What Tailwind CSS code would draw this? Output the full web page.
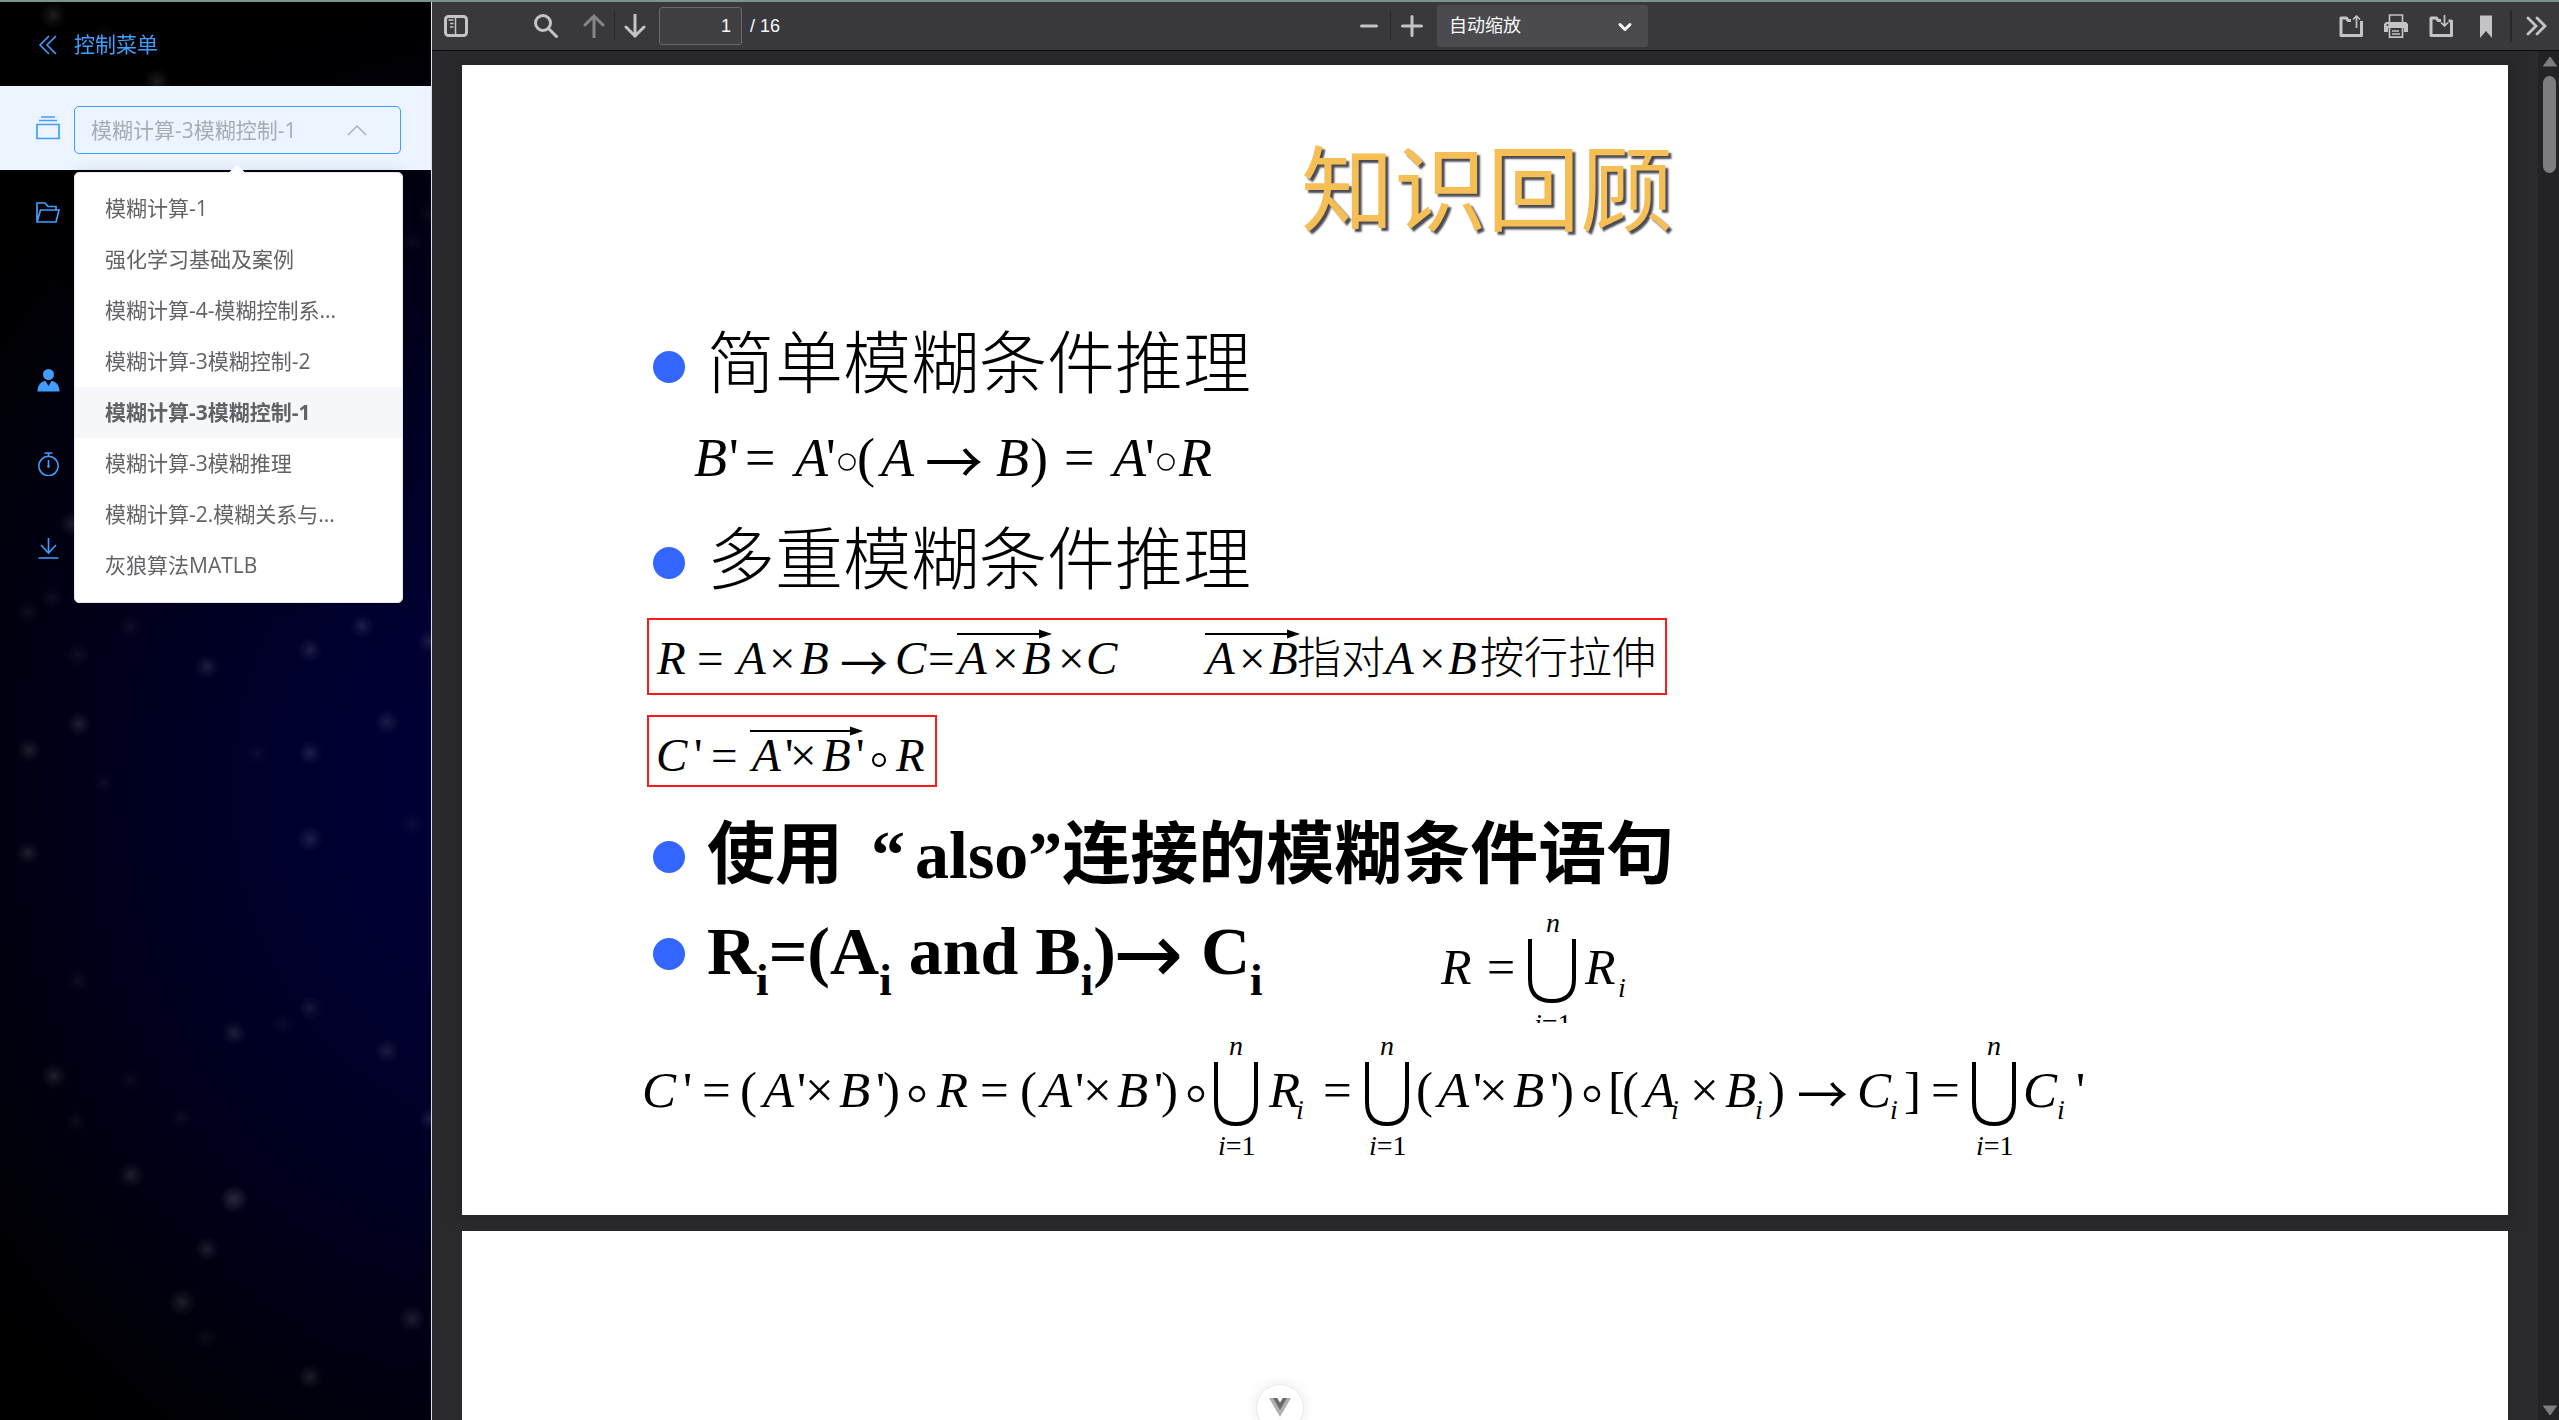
<!DOCTYPE html>
<html lang="zh-CN">
<head>
<meta charset="utf-8">
<title>控制菜单</title>
<script src="https://cdn.jsdelivr.net/npm/@tailwindcss/browser@4"></script>
</head>
<body class="flex h-screen flex-col overflow-hidden bg-black font-['Open_Sans','Noto_Sans_CJK_SC',sans-serif]">
<div class="h-0.5 shrink-0 bg-[#7a938f]"></div>
<div class="flex min-h-0 flex-1">

  <!-- Side menu -->
  <aside class="relative z-10 w-[432px] shrink-0 border-r border-[#dcdfe6] bg-[radial-gradient(ellipse_700px_820px_at_520px_790px,#000038_0%,#000032_25%,#00001c_60%,#000008_85%,#000000_100%)] text-[21px] text-[#409eff]">
    <svg class="absolute inset-0 h-full w-full" aria-hidden="true">
      <defs><radialGradient id="s"><stop offset="0" stop-color="#fff" stop-opacity=".8"/><stop offset=".4" stop-color="#fff" stop-opacity=".4"/><stop offset="1" stop-color="#fff" stop-opacity="0"/></radialGradient></defs>
      <g fill="url(#s)" opacity=".15">
        <circle cx="53" cy="13" r="14"/><circle cx="157" cy="80" r="14"/><circle cx="104" cy="33" r="12" opacity=".4"/>
        <circle cx="207" cy="665" r="13"/><circle cx="310" cy="648" r="13"/><circle cx="362" cy="624" r="13"/><circle cx="79" cy="722" r="13"/><circle cx="29" cy="748" r="13"/><circle cx="387" cy="720" r="13"/><circle cx="310" cy="751" r="13"/>
        <circle cx="430" cy="639" r="13"/><circle cx="130" cy="625" r="13" opacity=".5"/><circle cx="78" cy="653" r="13" opacity=".5"/><circle cx="28" cy="851" r="13"/><circle cx="310" cy="837" r="14"/><circle cx="104" cy="781" r="12" opacity=".4"/><circle cx="257" cy="752" r="12" opacity=".4"/><circle cx="412" cy="822" r="12" opacity=".4"/>
        <circle cx="78" cy="979" r="12" opacity=".5"/><circle cx="310" cy="1006" r="13" opacity=".8"/><circle cx="234" cy="1031" r="13"/><circle cx="387" cy="1049" r="13"/><circle cx="54" cy="1074" r="14"/><circle cx="283" cy="1022" r="12" opacity=".4"/><circle cx="130" cy="1078" r="12" opacity=".4"/><circle cx="181" cy="1116" r="12" opacity=".4"/><circle cx="76" cy="1120" r="12" opacity=".4"/>
        <circle cx="131" cy="1173" r="14"/><circle cx="234" cy="1197" r="15"/><circle cx="234" cy="1197" r="13"/><circle cx="207" cy="1247" r="13"/><circle cx="182" cy="1300" r="15"/><circle cx="412" cy="1317" r="14"/><circle cx="310" cy="1375" r="13"/><circle cx="206" cy="1336" r="13" opacity=".4"/><circle cx="430" cy="1117" r="12"/><circle cx="412" cy="240" r="13" opacity=".4"/><circle cx="430" cy="212" r="13" opacity=".4"/><circle cx="72" cy="522" r="14"/><circle cx="52" cy="596" r="12" opacity=".5"/><circle cx="28" cy="610" r="12" opacity=".5"/>
      </g>
    </svg>
    <nav class="relative flex flex-col">
      <button type="button" class="flex h-[84px] items-center gap-[14px] pl-9 pt-px text-left">
        <svg class="size-6" viewBox="0 0 24 24" fill="none" stroke="currentColor" stroke-width="1.6"><path d="M13 3 4 12l9 9M20 3l-9 9 9 9"/></svg>
        <span>控制菜单</span>
      </button>
      <div class="flex h-[84px] items-center gap-[14px] bg-[#ebf4ff] pl-9 pr-[30px] pt-1">
        <svg class="size-6 -mt-1" viewBox="0 0 24 24" fill="none" stroke="currentColor" stroke-width="1.7"><path d="M1 8.500h22v14H1zM3 4.500h18M5 1h14"/></svg>
        <div class="relative flex-1">
          <select id="doc" aria-label="文档" class="block h-12 w-full appearance-none rounded-[5px] border border-[#409eff] bg-transparent pl-4 pt-0.5 text-[#a8abb2]"><option>模糊计算-3模糊控制-1</option></select>
          <svg class="pointer-events-none absolute right-[34px] top-4 h-4 w-5" viewBox="0 0 20 16" fill="none" stroke="#a8abb2" stroke-width="1.400"><path d="m1 13 9-9 9 9"/></svg>
          <div class="absolute left-0 top-[66px] w-[329px] rounded-[5px] border border-[#e4e7ed] bg-white pb-[11px] pt-[10px] text-[#606266] shadow-[0_0_16px_rgba(0,0,0,0.12)]">
            <span class="absolute -top-[6px] left-[156px] size-3 rotate-45 rounded-xs bg-white"></span>
            <ul role="listbox" aria-label="文档列表" class="relative leading-[51px]">
              <li role="option" class="pl-[30px]">模糊计算-1</li>
              <li role="option" class="pl-[30px]">强化学习基础及案例</li>
              <li role="option" class="pl-[30px]">模糊计算-4-模糊控制系...</li>
              <li role="option" class="pl-[30px]">模糊计算-3模糊控制-2</li>
              <li role="option" aria-selected="true" class="bg-[#f5f7fa] pl-[30px] font-bold">模糊计算-3模糊控制-1</li>
              <li role="option" class="pl-[30px]">模糊计算-3模糊推理</li>
              <li role="option" class="pl-[30px]">模糊计算-2.模糊关系与...</li>
              <li role="option" class="pl-[30px]">灰狼算法MATLB</li>
            </ul>
          </div>
        </div>
      </div>
      <button type="button" aria-label="文件夹" class="mb-[84px] flex h-[84px] items-center pl-9"><svg class="size-6" viewBox="0 0 24 24" fill="none" stroke="currentColor" stroke-width="1.700"><path d="M1 22V3h8l3 3.500h8V10M1 22 4.500 10H23l-3 12z"/></svg></button>
      <button type="button" aria-label="用户" class="flex h-[84px] items-center pl-9"><svg class="size-6" viewBox="0 0 24 24" fill="currentColor"><circle cx="12.500" cy="6.500" r="5.500"/><path d="M1.500 23.500c0-6 3-10 8-10.500l3 5 3-5c5 .5 8 4.500 8 10.500z"/></svg></button>
      <button type="button" aria-label="计时" class="flex h-[84px] items-center pl-9"><svg class="size-6" viewBox="0 0 24 24" fill="none" stroke="currentColor" stroke-width="1.600"><circle cx="12.500" cy="14" r="9.700"/><path d="M8.500 1h8M12.500 1v3.500M12.500 8v6"/><circle cx="12.500" cy="14.500" r="1.300" fill="currentColor" stroke="none"/></svg></button>
      <button type="button" aria-label="下载" class="flex h-[84px] items-center pl-9"><svg class="size-6" viewBox="0 0 24 24" fill="none" stroke="currentColor" stroke-width="1.600"><path d="M12.500 2v15M5 9l7.500 8L20 9M2.500 22h20"/></svg></button>
    </nav>
  </aside>

  <!-- Document viewer -->
  <main class="flex min-w-0 flex-1 flex-col bg-[#2a2a2e]">
    <div class="grid h-[49px] shrink-0 grid-cols-[1fr_auto_1fr] items-center border-b border-[#0c0c0d] bg-[#38383d] font-['Liberation_Sans','Noto_Sans_CJK_SC',sans-serif] text-lg text-[#f9f9fa]">
      <div class="flex items-center pl-3 text-[#c4c4c6]">
        <button type="button" aria-label="侧栏"><svg class="size-6" viewBox="0 0 24 24" fill="none" stroke="currentColor" stroke-width="3"><rect x="1.500" y="2.500" width="21" height="19" rx="3"/><path d="M11.500 2v20M4.500 6h5M6 9.500h3.500M6 13h3.500" stroke-width="1.500"/></svg></button>
        <button type="button" aria-label="查找" class="ml-[66px]"><svg class="size-6" viewBox="0 0 24 24" fill="none" stroke="currentColor" stroke-width="3" stroke-linecap="round"><circle cx="9" cy="9" r="7.500"/><path d="m14.500 14.500 8 8"/></svg></button>
        <button type="button" aria-label="上一页" class="ml-6 text-[#85858a]"><svg class="size-6" viewBox="0 0 24 24" fill="none" stroke="currentColor" stroke-width="3" stroke-linecap="round"><path d="M12 23V2M3 11l9-9 9 9"/></svg></button>
        <span class="ml-2 h-[30px] w-px bg-[#28282c]"></span>
        <button type="button" aria-label="下一页" class="ml-2"><svg class="size-6" viewBox="0 0 24 24" fill="none" stroke="currentColor" stroke-width="3" stroke-linecap="round"><path d="M12 1v21M3 13l9 9 9-9"/></svg></button>
        <input type="text" value="1" aria-label="页码" class="ml-3 h-[38px] w-[83px] rounded-[3px] border border-[#6a6a6e] bg-[#404044] pr-[10px] text-right text-[#f9f9fa]">
        <span class="ml-2 text-[#f9f9fa]">/ 16</span>
      </div>
      <div class="flex items-center pl-[14px] text-[#c4c4c6]">
        <button type="button" aria-label="缩小"><svg class="size-6" viewBox="0 0 24 24" fill="none" stroke="currentColor" stroke-width="3" stroke-linecap="round"><path d="M4.500 12h15"/></svg></button>
        <span class="ml-[9px] h-[30px] w-px bg-[#28282c]"></span>
        <button type="button" aria-label="放大" class="ml-[9px]"><svg class="size-6" viewBox="0 0 24 24" fill="none" stroke="currentColor" stroke-width="3" stroke-linecap="round"><path d="M2.500 12h19M12 2.500v19"/></svg></button>
        <div class="relative ml-[13px]">
          <select aria-label="缩放" class="block h-[42px] w-[211px] appearance-none rounded-[3px] bg-[#4a4a4f] pl-3 text-[#f9f9fa]"><option>自动缩放</option></select>
          <svg class="pointer-events-none absolute right-[15px] top-[14px] size-4" viewBox="0 0 16 16" fill="none" stroke="#f9f9fa" stroke-width="3" stroke-linecap="round" stroke-linejoin="round"><path d="m3 5.500 5 5 5-5"/></svg>
        </div>
      </div>
      <div class="flex items-center justify-end gap-[21px] pr-[11px] text-[#c4c4c6]">
        <button type="button" aria-label="打开"><svg class="size-6" viewBox="0 0 24 24" fill="none" stroke="currentColor" stroke-width="3" stroke-linejoin="round"><path d="M12 6.500H9L7.500 4H2v17.500h20.500V7"/><path d="M17.500 14V2M14 5.500 17.500 2 21 5.500" stroke-width="1.700"/></svg></button>
        <button type="button" aria-label="打印"><svg class="size-6" viewBox="0 0 24 24"><path d="M5.500 9V1h13v8" fill="none" stroke="currentColor" stroke-width="1.600"/><path d="M2 8h20l2 2v8h-4v-4H4v4H0v-8z" fill="currentColor"/><path d="M5.500 14v9.200h13V14M8 17h7M8 20h8" fill="none" stroke="currentColor" stroke-width="1.700"/><circle cx="3.500" cy="11" r="1" fill="#38383d"/></svg></button>
        <button type="button" aria-label="保存"><svg class="size-6" viewBox="0 0 24 24" fill="none" stroke="currentColor" stroke-width="3" stroke-linejoin="round"><path d="M12 6.500H9L7.500 4H2v17.500h20.500V7h-3"/><path d="M15.500 1v11M12 8.500l3.500 3.500L19 8.500" stroke-width="1.700"/></svg></button>
        <div class="flex items-center gap-3">
          <button type="button" aria-label="书签"><svg class="size-6" viewBox="0 0 24 24" fill="currentColor"><path d="M6 1.500h12V24l-6-7-6 7z"/></svg></button>
          <span class="h-8 w-0.5 bg-[#28282c]"></span>
          <button type="button" aria-label="更多"><svg class="size-6" viewBox="0 0 24 24" fill="none" stroke="currentColor" stroke-width="2.800" stroke-linecap="round"><path d="m4 4 8 8-8 8M13 4l8 8-8 8"/></svg></button>
        </div>
      </div>
    </div>

    <div class="flex min-h-0 flex-1">
      <div class="flex min-w-0 flex-1 flex-col gap-4 overflow-hidden px-[30px] pt-[14px] font-['Liberation_Serif','Noto_Sans_CJK_SC',serif] text-black">
        <!-- Page 1 -->
        <article class="shrink-0 bg-white pb-[49px] pl-[180px] pt-[78px] shadow-[0_0_9px_4px_rgba(38,38,38,1)]">
          <h1 class="pr-[176px] text-center text-[93px] font-normal leading-[100px] text-[#f5bf55] [text-shadow:3px_3px_2px_#4a4a55]">知识回顾</h1>
          <div class="mt-[82px] flex h-20 items-center gap-[22px] pl-[11px] text-[68px] font-light leading-[80px]"><span class="mt-1 size-8 rounded-full bg-[#3366ff]"></span><h2>简单模糊条件推理</h2></div>
          <svg class="mt-4 block h-20 w-[620px] overflow-visible" font-size="54"><text y="55" x="52 87 103 153 184 215 239"><tspan font-style="italic">B</tspan>'=<tspan font-style="italic">A</tspan>'(<tspan font-style="italic">A</tspan></text><text x="283" y="63" font-size="58" font-family="Noto Sans CJK SC">→</text><text y="55" x="354 388 422 471 503 537"><tspan font-style="italic">B</tspan>)=<tspan font-style="italic">A</tspan>'<tspan font-style="italic">R</tspan></text><g fill="none" stroke="#000" stroke-width="1.500"><circle cx="205" cy="41" r="8"/><circle cx="524" cy="41" r="8"/></g></svg>
          <div class="mt-5 flex h-20 items-center gap-[22px] pl-[11px] text-[68px] font-light leading-[80px]"><span class="mt-1 size-8 rounded-full bg-[#3366ff]"></span><h2>多重模糊条件推理</h2></div>
          <div class="ml-[5px] mt-[17px] h-[77px] w-[1020px] border-2 border-[#ff1a1a]">
            <svg class="block h-full w-full overflow-visible" font-size="47"><text y="54" x="8 48 88 120 151"><tspan font-style="italic">R</tspan>=<tspan font-style="italic">A</tspan>×<tspan font-style="italic">B</tspan></text><text x="191" y="61" font-size="48" font-family="Noto Sans CJK SC">→</text><text y="54" x="246 279 309 343 373 409 437"><tspan font-style="italic">C</tspan>=<tspan font-style="italic">A</tspan>×<tspan font-style="italic">B</tspan>×<tspan font-style="italic">C</tspan></text><text y="54" x="557 590 620"><tspan font-style="italic">A</tspan>×<tspan font-style="italic">B</tspan></text><text y="54" x="736 770 799"><tspan font-style="italic">A</tspan>×<tspan font-style="italic">B</tspan></text><g font-size="44" font-weight="300"><text x="648" y="54">指对</text><text x="831" y="54">按行拉伸</text></g><path d="M308 14h88m-5-3 9 3-9 3zM556 14h88m-5-3 9 3-9 3z" stroke="#000" stroke-width="2"/></svg>
          </div>
          <div class="ml-[5px] mt-5 h-[72px] w-[290px] border-2 border-[#ff1a1a]">
            <svg class="block h-full w-full overflow-visible" font-size="47"><text y="54" x="7 45 62 103 136 141 173 207 247"><tspan font-style="italic">C</tspan>'=<tspan font-style="italic">A</tspan>'×<tspan font-style="italic">B</tspan>'<tspan font-style="italic">R</tspan></text><circle cx="230" cy="43" r="6" fill="none" stroke="#000" stroke-width="2"/><path d="M101 14h106m-5-3 9 3-9 3z" stroke="#000" stroke-width="2"/></svg>
          </div>
          <div class="mt-7 flex h-20 items-center gap-[22px] pl-[11px] text-[68px] font-bold leading-[80px]"><span class="mt-1 size-8 rounded-full bg-[#3366ff]"></span><h2>使用<span class="ml-7 mr-[10px]">“</span>also”连接的模糊条件语句</h2></div>
          <div class="mt-5 flex h-[108px] items-start gap-[22px] pl-[11px] text-[68px] font-bold leading-[80px]">
            <span class="mt-[23px] size-8 rounded-full bg-[#3366ff]"></span>
            <svg class="h-[108px] w-[570px] overflow-visible" font-size="68"><text x="0" y="59">R<tspan dy="21" font-size="45">i</tspan><tspan dy="-21">=(A</tspan><tspan dy="21" font-size="45">i</tspan><tspan dy="-21"> and B</tspan><tspan dy="21" font-size="45">i</tspan><tspan dy="-21">)</tspan></text><text x="406" y="68" font-size="84" font-weight="400" font-family="DejaVu Sans">→</text><text x="494" y="59">C<tspan dy="21" font-size="45">i</tspan></text></svg>
            <svg class="ml-[130px] h-[108px] w-[220px]" font-size="50" font-weight="400"><text y="69" x="12 58 156"><tspan font-style="italic">R</tspan>=<tspan font-style="italic">R</tspan></text><g font-size="28" font-style="italic"><text x="117" y="17">n</text><text x="189" y="82">i</text><text x="105" y="118">i<tspan font-style="normal">=1</tspan></text></g><path d="M101 24v40q0 22 22 22t22-22V24" fill="none" stroke="#000" stroke-width="4"/></svg>
          </div>
          <svg class="mt-[13px] block h-[130px] w-[1480px] overflow-visible" font-size="51">
            <text y="71" x="0 41 60 98 121 155 163 197 234 241 295"><tspan font-style="italic">C</tspan>'=(<tspan font-style="italic">A</tspan>'×<tspan font-style="italic">B</tspan>')<tspan font-style="italic">R</tspan></text>
            <text y="71" x="338 378 399 433 441 475 512 519 627 681">=(<tspan font-style="italic">A</tspan>'×<tspan font-style="italic">B</tspan>')<tspan font-style="italic">R</tspan>=</text>
            <text y="71" x="774 796 831 837 871 908 915 966 980 1002 1048 1083 1126">(<tspan font-style="italic">A</tspan>'×<tspan font-style="italic">B</tspan>')[(<tspan font-style="italic">A</tspan>×<tspan font-style="italic">B</tspan>)</text>
            <text x="1155" y="78" font-family="Noto Sans CJK SC">→</text>
            <text y="71" x="1215 1262 1289 1381 1434"><tspan font-style="italic">C</tspan>]=<tspan font-style="italic">C</tspan>'</text>
            <g fill="none" stroke="#000" stroke-width="2.500"><circle cx="275" cy="58" r="7"/><circle cx="554" cy="58" r="7"/><circle cx="950" cy="58" r="7"/></g>
            <g fill="none" stroke="#000" stroke-width="4"><path d="M574 26v40q0 22 20 22t20-22V26M725 26v40q0 22 20 22t20-22V26M1332 26v40q0 22 20 22t20-22V26"/></g>
            <g font-size="28" font-style="italic"><text y="19" x="587 738 1345">nnn</text><text y="83" x="654 1029 1113 1248 1415">iiiii</text><text y="119" x="576">i<tspan font-style="normal">=1</tspan></text><text y="119" x="727">i<tspan font-style="normal">=1</tspan></text><text y="119" x="1334">i<tspan font-style="normal">=1</tspan></text></g>
          </svg>
        </article>
        <!-- Page 2 -->
        <article class="h-[1150px] shrink-0 bg-white"></article>
      </div>
      <div class="flex w-[21px] flex-col items-center bg-[#232327] pb-1 pl-0.5 pt-[5px]" aria-hidden="true">
        <svg class="h-3 w-4" viewBox="0 0 16 12" fill="#7d7d80"><path d="m8 1 6.500 9h-13z" stroke="#7d7d80" stroke-linejoin="round"/></svg>
        <span class="mb-auto mt-2 h-[97px] w-[13px] rounded-full bg-[#7d7d80]"></span>
        <svg class="h-3 w-4" viewBox="0 0 16 12" fill="#7d7d80"><path d="m8 11 6.500-9h-13z" stroke="#7d7d80" stroke-linejoin="round"/></svg>
      </div>
    </div>
  </main>
</div>
<button type="button" aria-label="Vue DevTools" class="fixed -bottom-3 left-1/2 z-20 flex size-12 -translate-x-1/2 justify-center rounded-full border border-[#eaeaea] bg-white pt-[13px] shadow-[0_0_12px_rgba(0,0,0,0.1)]">
  <svg class="h-[19px] w-[22px]" viewBox="0 0 22 19"><path d="M0 0h22L11 19z" fill="#b0b0b0"/><path d="M4 0h4l3 5 3-5h4l-7 12z" fill="#6a6a6a"/><path d="M8.500 0h5L11 4z" fill="#fff"/></svg>
</button>
</body>
</html>
